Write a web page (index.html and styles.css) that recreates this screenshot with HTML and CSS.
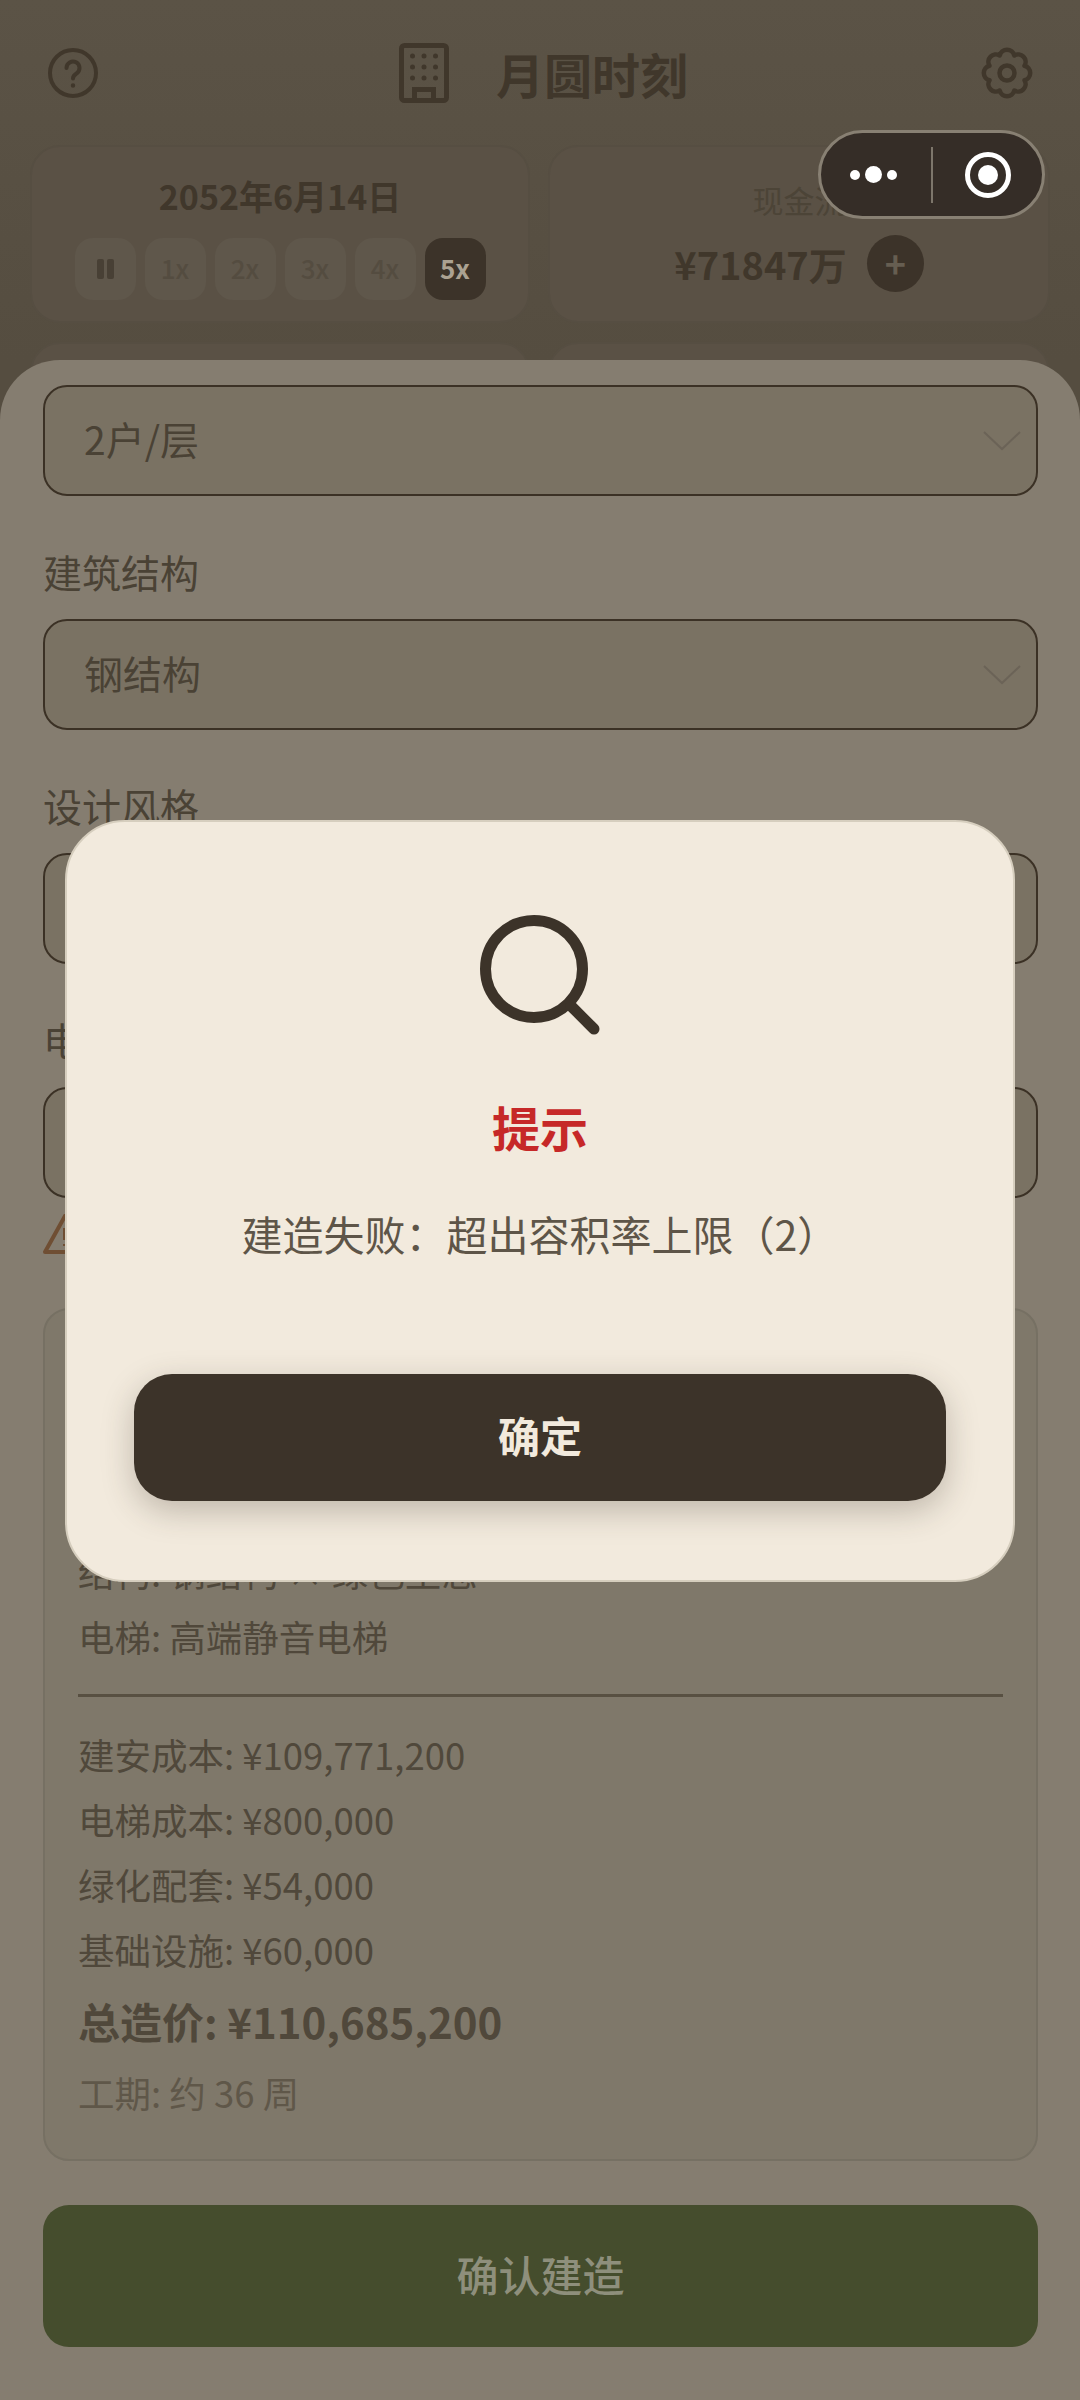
FILE: index.html
```html
<!DOCTYPE html>
<html lang="zh-CN">
<head>
    <meta charset="UTF-8">
    <meta name="viewport" content="width=device-width, initial-scale=1.0">
    <title>月圆时刻</title>
    <link rel="stylesheet" href="styles.css">
</head>
<body>
    <header class="topbar">
        <svg class="icon-help" width="50" height="50" viewBox="0 0 50 50" fill="none" stroke="#40372b" stroke-width="4" stroke-linecap="round">
            <circle cx="25" cy="25" r="23"/>
            <path d="M18.5 20a6.5 6.5 0 1 1 10 5.5c-2 1.3-3.5 2.5-3.5 5"/>
            <circle cx="25" cy="37.5" r="1" fill="#40372b" stroke-width="2.5"/>
        </svg>
        <div class="brand">
            <svg width="50" height="60" viewBox="0 0 50 60" fill="none" stroke="#40372b" stroke-width="5">
                <rect x="2.500" y="2.500" width="45" height="55" rx="3"/>
                <path d="M15.500 57V46.500h19V57"/>
                <g fill="#40372b" stroke="none">
                    <circle cx="13.500" cy="13" r="2.500"/><circle cx="25" cy="13" r="2.500"/><circle cx="36.500" cy="13" r="2.500"/>
                    <circle cx="13.500" cy="24" r="2.500"/><circle cx="25" cy="24" r="2.500"/><circle cx="36.500" cy="24" r="2.500"/>
                    <circle cx="13.500" cy="35" r="2.500"/><circle cx="25" cy="35" r="2.500"/><circle cx="36.500" cy="35" r="2.500"/>
                </g>
            </svg>
            <h1 class="brand-name">月圆时刻</h1>
        </div>
        <svg class="icon-gear" width="56" height="56" viewBox="2 2 56 56" fill="none" stroke="#40372b" stroke-width="4.500" stroke-linejoin="round">
            <path d="M47.55 22.73A7.500 7.500 0 0 1 47.55 37.27A7.500 7.500 0 0 1 37.27 47.55A7.500 7.500 0 0 1 22.73 47.55A7.500 7.500 0 0 1 12.45 37.27A7.500 7.500 0 0 1 12.45 22.73A7.500 7.500 0 0 1 22.73 12.45A7.500 7.500 0 0 1 37.27 12.45A7.500 7.500 0 0 1 47.55 22.73Z"/>
            <circle cx="30" cy="30" r="7.500"/>
        </svg>
    </header>

    <section class="stats">
        <div class="stat-card">
            <div class="date">2052年6月14日</div>
            <div class="speeds">
                <div class="speed"><span class="pause-bar"></span><span class="pause-bar"></span></div>
                <div class="speed"><span>1x</span></div>
                <div class="speed"><span>2x</span></div>
                <div class="speed"><span>3x</span></div>
                <div class="speed"><span>4x</span></div>
                <div class="speed speed-on"><span>5x</span></div>
            </div>
        </div>
        <div class="stat-card">
            <div class="cash-label">现金流</div>
            <div class="cash-row">
                <span class="cash-value">¥71847万</span>
                <span class="cash-add">+</span>
            </div>
        </div>
        <div class="stat-card"></div>
        <div class="stat-card"></div>
    </section>

    <!-- mini program capsule -->
    <div class="capsule">
        <div class="capsule-more"><i></i><i class="big"></i><i></i></div>
        <div class="capsule-line"></div>
        <div class="capsule-close"><i></i></div>
    </div>

    <main class="sheet">
        <div class="select">
            <span>2户/层</span>
            <svg width="38" height="20" viewBox="0 0 38 20" fill="none" stroke="#6b6357" stroke-width="2"><path d="M1 1l18 17L37 1"/></svg>
        </div>

        <div class="field-label">建筑结构</div>
        <div class="select">
            <span>钢结构</span>
            <svg width="38" height="20" viewBox="0 0 38 20" fill="none" stroke="#6b6357" stroke-width="2"><path d="M1 1l18 17L37 1"/></svg>
        </div>

        <div class="field-label">设计风格</div>
        <div class="select"></div>

        <div class="field-label">电梯配置</div>
        <div class="select"></div>

        <div class="warning">
            <svg width="44" height="40" viewBox="0 0 44 40" fill="none" stroke="#6f4e33" stroke-width="4" stroke-linejoin="round">
                <path d="M22 2L42 38H2Z"/>
                <path d="M22 14v12M22 30v2"/>
            </svg>
        </div>

        <section class="summary">
            <div class="sum-row">结构: 钢结构 × 绿色生态</div>
            <div class="sum-row">电梯: 高端静音电梯</div>
            <div class="sum-line"></div>
            <div class="sum-row">建安成本: ¥109,771,200</div>
            <div class="sum-row">电梯成本: ¥800,000</div>
            <div class="sum-row">绿化配套: ¥54,000</div>
            <div class="sum-row">基础设施: ¥60,000</div>
            <div class="sum-total">总造价: ¥110,685,200</div>
            <div class="sum-row sum-muted">工期: 约 36 周</div>
        </section>

        <div class="build-btn"><span>确认建造</span></div>
    </main>

    <div class="modal">
        <svg class="modal-icon" width="120" height="120" viewBox="0 0 120 120" fill="none" stroke="#3c3329" stroke-width="11" stroke-linecap="round">
            <circle cx="54" cy="57" r="48.500"/>
            <path d="M91 94l23 23"/>
        </svg>
        <h2 class="modal-title">提示</h2>
        <p class="modal-text">建造失败：超出容积率上限（2）</p>
        <div class="modal-btn"><span>确定</span></div>
    </div>
</body>
</html>
```

FILE: styles.css
```css
* {
    box-sizing: border-box;
}

body {
    margin: 0;
    width: 1080px;
    height: 2400px;
    position: relative;
    overflow: hidden;
    background: linear-gradient(#5b5346, #554d40 360px);
    font-family: "Noto Sans CJK SC", "Noto Sans", sans-serif;
    color: #40372b;
}

.topbar {
    height: 145px;
    padding: 0 45px 0 48px;
    display: flex;
    align-items: center;
    justify-content: space-between;
}

.brand {
    display: flex;
    align-items: center;
    gap: 47px;
    margin-left: 10px;
}

.brand-name {
    margin: 0;
    font-size: 48px;
    line-height: 60px;
    font-weight: 700;
    color: #40372b;
}

.stats {
    display: grid;
    grid-template-columns: 500px 502px;
    grid-auto-rows: 178px;
    gap: 19px 18px;
    padding: 0 30px;
}

.stat-card {
    border: 2px solid #564e42;
    border-radius: 30px;
    background: #5a5145;
    display: flex;
    flex-direction: column;
    align-items: center;
}

.date {
    margin-top: 24px;
    font-size: 34px;
    line-height: 50px;
    font-weight: 700;
    color: #40372b;
}

.speeds {
    display: flex;
    gap: 9px;
    margin-top: 17px;
}

.speed {
    width: 61px;
    height: 62px;
    border-radius: 18px;
    background: #5f574b;
    color: #544c40;
    font-size: 26px;
    font-weight: 500;
    display: flex;
    align-items: center;
    justify-content: center;
    gap: 3px;
}

.speed span:not(.pause-bar) {
    margin-bottom: 4px;
}

.speed-on {
    background: #3c3329;
    color: #aba292;
    font-weight: 700;
}

.pause-bar {
    width: 7px;
    height: 20px;
    border-radius: 2px;
    background: #484035;
}

.cash-label {
    margin-top: 31px;
    font-size: 31px;
    line-height: 44px;
    color: #4c4437;
}

.cash-row {
    display: flex;
    align-items: center;
    gap: 20px;
    margin-top: 13px;
}

.cash-value {
    font-size: 38px;
    line-height: 56px;
    font-weight: 700;
    color: #40372b;
}

.cash-add {
    width: 57px;
    height: 57px;
    border-radius: 50%;
    background: #3c3329;
    color: #665e51;
    font-size: 36px;
    line-height: 54px;
    font-weight: 700;
    text-align: center;
}

.capsule {
    position: absolute;
    left: 818px;
    top: 130px;
    width: 227px;
    height: 89px;
    border: 3px solid #888073;
    border-radius: 45px;
    background: #352d27;
    display: flex;
    align-items: center;
    z-index: 3;
}

.capsule-more {
    width: 110px;
    padding-right: 6px;
    display: flex;
    align-items: center;
    justify-content: center;
    gap: 5px;
}

.capsule-more i {
    width: 10px;
    height: 10px;
    border-radius: 50%;
    background: #fff;
}

.capsule-more i.big {
    width: 17px;
    height: 17px;
}

.capsule-line {
    width: 2px;
    height: 56px;
    background: #7d766b;
}

.capsule-close {
    flex: 1;
    display: flex;
    justify-content: center;
}

.capsule-close i {
    width: 46px;
    height: 46px;
    border: 5px solid #fff;
    border-radius: 50%;
    display: flex;
    align-items: center;
    justify-content: center;
}

.capsule-close i::after {
    content: "";
    width: 20px;
    height: 20px;
    border-radius: 50%;
    background: #fff;
}

.sheet {
    position: absolute;
    left: 0;
    right: 0;
    top: 360px;
    bottom: 0;
    padding: 25px 42px 0 43px;
    background: #857d70;
    border-radius: 60px 60px 0 0;
}

.select {
    height: 111px;
    padding: 0 15px 0 39px;
    border: 2px solid #3b3125;
    border-radius: 24px;
    background: #7a7263;
    display: flex;
    align-items: center;
    justify-content: space-between;
    font-size: 39px;
    color: #4a4235;
}

.select span {
    margin-bottom: 6px;
}

.field-label {
    margin: 50px 0 23px;
    font-size: 39px;
    line-height: 50px;
    color: #4a4235;
}

.warning {
    height: 40px;
    margin-top: 16px;
    display: flex;
}

.summary {
    height: 853px;
    margin-top: 54px;
    padding: 229px 33px 0;
    border: 2px solid #767063;
    border-radius: 26px;
    background: #7f786a;
}

.sum-row {
    font-size: 36.500px;
    line-height: 65px;
    color: #50483b;
}

.sum-line {
    height: 3px;
    margin: 25px 0 25px;
    background: #585042;
}

.sum-total {
    margin-top: 3px;
    font-size: 42px;
    line-height: 72px;
    font-weight: 700;
    color: #50483b;
}

.sum-muted {
    margin-top: 3px;
    color: #5f5749;
}

.build-btn {
    height: 142px;
    margin-top: 44px;
    border-radius: 26px;
    background: #454d2d;
    color: #8e8f7c;
    font-size: 42px;
    font-weight: 500;
    display: flex;
    align-items: center;
    justify-content: center;
}

.build-btn span,
.modal-btn span {
    margin-bottom: 6px;
}

.modal {
    position: absolute;
    left: 65px;
    top: 820px;
    width: 950px;
    height: 762px;
    padding: 90px 67px 0;
    border: 2px solid #d6cebe;
    border-radius: 60px;
    background: #f2eadd;
    display: flex;
    flex-direction: column;
    align-items: center;
}

.modal-icon {
    overflow: visible;
}

.modal-title {
    margin: 62px 0 0;
    font-size: 48px;
    line-height: 64px;
    font-weight: 700;
    color: #c62828;
}

.modal-text {
    margin: 47px 0 0;
    font-size: 41px;
    line-height: 56px;
    color: #5e5548;
}

.modal-btn {
    width: 100%;
    height: 127px;
    margin-top: 113px;
    border-radius: 38px;
    background: #3c3329;
    color: #f2eadd;
    font-size: 42px;
    font-weight: 700;
    display: flex;
    align-items: center;
    justify-content: center;
    box-shadow: 0 10px 32px rgba(60, 51, 41, 0.28);
}
```
